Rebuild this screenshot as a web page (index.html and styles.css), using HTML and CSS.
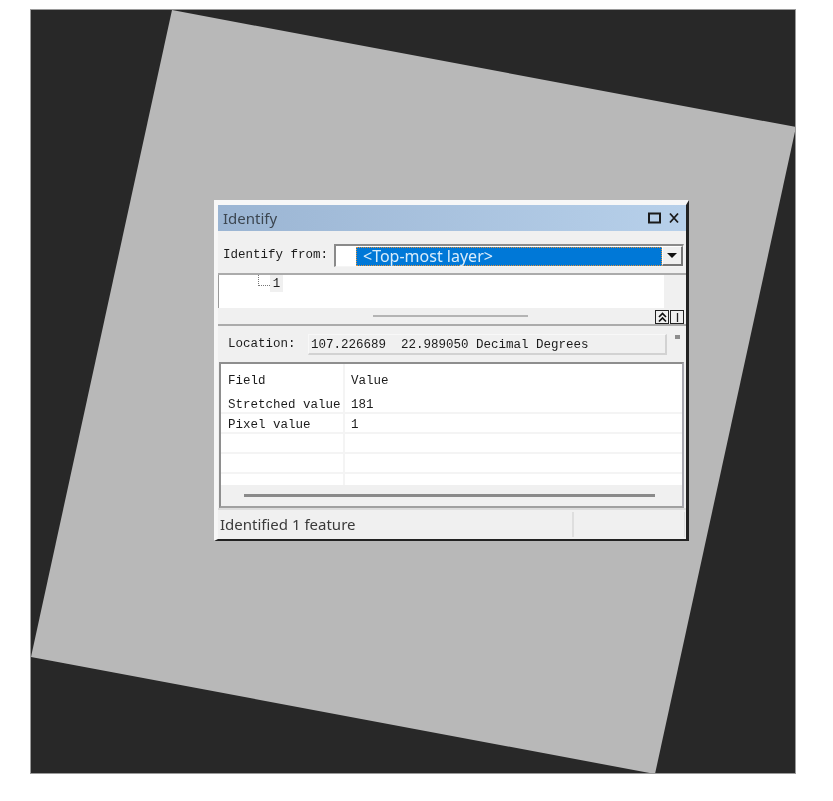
FILE: index.html
```html
<!DOCTYPE html>
<html lang="en">
<head>
    <meta charset="UTF-8">
    <title>Identify</title>
    <link rel="stylesheet" href="styles.css">
</head>
<body>
    <div class="scene">
        <svg class="raster" width="764" height="763" viewBox="0 0 764 763">
            <polygon points="141,0 765,117 624,764 0,647" fill="#b8b8b8"/>
        </svg>

        <div class="identify-window">
            <!-- Title -->
            <div class="title-bar">
                <span class="title-text">Identify</span>
                <svg class="title-icons" width="32" height="12" viewBox="0 0 32 12">
                    <rect x="1" y="1.500" width="11" height="9" fill="none" stroke="#1a1a1a" stroke-width="2"/>
                    <path d="M22 1.500l8 9M30 1.500l-8 9" fill="none" stroke="#1a1a1a" stroke-width="1.800"/>
                </svg>
            </div>

            <!-- Identify from -->
            <div class="from-row">
                <span class="mono-label from-label">Identify from:</span>
                <div class="combo">
                    <div class="combo-blank"></div>
                    <div class="combo-value">&lt;Top-most layer&gt;</div>
                    <div class="combo-btn"><span class="combo-arrow"></span></div>
                </div>
            </div>

            <!-- Tree -->
            <div class="tree-row">
                <div class="tree">
                    <span class="tree-branch"></span>
                    <span class="tree-label">1</span>
                </div>
                <div class="tree-gutter"></div>
            </div>

            <!-- Splitter -->
            <div class="splitter">
                <span class="splitter-line"></span>
                <div class="splitter-btns">
                    <span class="mini-btn">
                        <svg width="11" height="11" viewBox="0 0 11 11">
                            <path d="M2 5l3.500-3.500L9 5M2 9.500L5.500 6 9 9.500" fill="none" stroke="#111" stroke-width="1.700"/>
                        </svg>
                    </span>
                    <span class="mini-btn">
                        <svg width="11" height="11" viewBox="0 0 11 11">
                            <path d="M5.500 1v9" fill="none" stroke="#222" stroke-width="1.300"/>
                        </svg>
                    </span>
                </div>
            </div>

            <!-- Location -->
            <div class="location-row">
                <span class="mono-label location-label">Location:</span>
                <div class="location-field">107.226689  22.989050 Decimal Degrees</div>
                <span class="location-menu"></span>
            </div>

            <!-- Attributes -->
            <div class="attr-box">
                <div class="attr-row attr-head">
                    <div class="attr-cell attr-field">Field</div>
                    <div class="attr-cell attr-value">Value</div>
                </div>
                <div class="attr-row">
                    <div class="attr-cell attr-field">Stretched value</div>
                    <div class="attr-cell attr-value">181</div>
                </div>
                <div class="attr-row">
                    <div class="attr-cell attr-field">Pixel value</div>
                    <div class="attr-cell attr-value">1</div>
                </div>
                <div class="attr-row">
                    <div class="attr-cell attr-field"></div>
                    <div class="attr-cell attr-value"></div>
                </div>
                <div class="attr-row">
                    <div class="attr-cell attr-field"></div>
                    <div class="attr-cell attr-value"></div>
                </div>
                <div class="attr-row attr-last">
                    <div class="attr-cell attr-field"></div>
                    <div class="attr-cell attr-value"></div>
                </div>
                <div class="attr-scroll"><span class="attr-thumb"></span></div>
            </div>

            <!-- Status -->
            <div class="status-bar">
                <span class="status-text">Identified 1 feature</span>
                <span class="status-end"></span>
            </div>
        </div>
    </div>
</body>
</html>
```

FILE: styles.css
```css
* {
    margin: 0;
    padding: 0;
    box-sizing: border-box;
}

body {
    background: #fff;
    height: 100vh;
    overflow: hidden;
}

.scene {
    position: relative;
    width: 766px;
    height: 765px;
    margin: 9px 0 0 30px;
    background: #282828;
    border: 1px solid #9a9a9a;
    filter: blur(0.35px);
}

.raster {
    position: absolute;
    top: 0;
    left: 0;
    display: block;
}

.identify-window {
    position: absolute;
    top: 190px;
    left: 183px;
    width: 475px;
    height: 341px;
    display: flex;
    flex-direction: column;
    background: #f0f0f0;
    border-style: solid;
    border-width: 5px 3px 2px 4px;
    border-color: #f7f7f7 #222 #222 #f7f7f7;
}

.title-bar {
    height: 26px;
    flex: none;
    display: flex;
    align-items: center;
    justify-content: space-between;
    padding: 0 6px 0 5px;
    background: linear-gradient(90deg, #9bb5d3 0%, #b7d0ea 100%);
}

.title-text {
    font-family: "Noto Sans", sans-serif;
    font-size: 15px;
    color: #3c4650;
}

.title-icons {
    display: block;
    margin-bottom: 1px;
}

.mono-label {
    font-family: "Liberation Mono", monospace;
    font-size: 12.500px;
    color: #1c1c1c;
}

.from-row {
    height: 42px;
    flex: none;
    display: flex;
    align-items: center;
    padding: 7px 2px 0 5px;
}

.from-label {
    width: 109px;
    flex: none;
    white-space: nowrap;
    margin-top: -1px;
}

.combo {
    width: 350px;
    height: 23px;
    margin-left: 2px;
    display: flex;
    background: #fff;
    border-style: solid;
    border-width: 2px 1px 1px 2px;
    border-color: #8a8a8a #f5f5f5 #f5f5f5 #8a8a8a;
}

.combo-blank {
    width: 20px;
    flex: none;
}

.combo-value {
    flex: 1;
    margin-top: 1px;
    padding-left: 6px;
    background: #0078d7;
    border: 1px dotted #e0913a;
    font-family: "Noto Sans", sans-serif;
    font-size: 16px;
    line-height: 17px;
    white-space: nowrap;
    color: #d8ecfb;
}

.combo-btn {
    width: 21px;
    flex: none;
    display: flex;
    align-items: center;
    justify-content: center;
    background: #f0f0f0;
    border-style: solid;
    border-width: 1px 2px 2px 1px;
    border-color: #fff #777 #777 #fff;
}

.combo-arrow {
    width: 0;
    height: 0;
    border-style: solid;
    border-width: 5px 5px 0 5px;
    border-color: #111 transparent transparent transparent;
}

.tree-row {
    height: 35px;
    flex: none;
    display: flex;
    border-top: 2px solid #ababab;
}

.tree {
    position: relative;
    flex: 1;
    background: #fff;
    border-left: 1px solid #9a9a9a;
}

.tree-branch {
    position: absolute;
    top: 0;
    left: 39px;
    width: 12px;
    height: 11px;
    border-left: 1px dotted #777;
    border-bottom: 1px dotted #777;
}

.tree-label {
    position: absolute;
    top: 0;
    left: 51px;
    width: 13px;
    height: 17px;
    background: #f0f0f0;
    font-family: "Liberation Mono", monospace;
    font-size: 12.500px;
    line-height: 19px;
    text-align: center;
    color: #1c1c1c;
}

.tree-gutter {
    width: 22px;
    flex: none;
}

.splitter {
    height: 16px;
    flex: none;
    display: flex;
    align-items: center;
    justify-content: center;
}

.splitter-line {
    width: 155px;
    height: 2px;
    margin-left: -4px;
    background: #b4b4b4;
}

.splitter-btns {
    position: absolute;
    top: 105px;
    right: 2px;
    display: flex;
    gap: 1px;
}

.mini-btn {
    width: 14px;
    height: 14px;
    display: flex;
    align-items: center;
    justify-content: center;
    background: #f0f0f0;
    border: 1px solid #222;
}

.location-row {
    position: relative;
    height: 38px;
    flex: none;
    display: flex;
    align-items: center;
    padding: 0 0 0 10px;
    border-top: 2px solid #ababab;
}

.location-label {
    width: 80px;
    flex: none;
}

.location-field {
    width: 359px;
    height: 21px;
    margin-top: 1px;
    padding-left: 2px;
    font-family: "Liberation Mono", monospace;
    font-size: 12.500px;
    line-height: 21px;
    white-space: pre;
    color: #1c1c1c;
    border-style: solid;
    border-width: 1px 2px 2px 1px;
    border-color: #f8f8f8 #d2d2d2 #d2d2d2 #f8f8f8;
}

.location-menu {
    position: absolute;
    top: 9px;
    right: 6px;
    width: 5px;
    height: 4px;
    background: #8c8c8c;
}

.attr-box {
    height: 146px;
    flex: none;
    margin: 0 2px 0 1px;
    display: flex;
    flex-direction: column;
    background: #fff;
    border: 2px solid #8e8e8e;
    border-right-color: #a8a8b0;
    border-bottom-color: #a0a0a0;
}

.attr-row {
    height: 20px;
    flex: none;
    display: flex;
    border-bottom: 2px solid #f4f4f4;
    font-family: "Liberation Mono", monospace;
    font-size: 12.500px;
    color: #1c1c1c;
}

.attr-head {
    height: 30px;
    border-bottom: none;
}

.attr-last {
    height: 11px;
    border-bottom: none;
}

.attr-cell {
    padding: 3px 0 0 7px;
    display: flex;
    align-items: center;
}

.attr-field {
    width: 124px;
    flex: none;
    white-space: nowrap;
    border-right: 2px solid #f4f4f4;
}

.attr-value {
    padding-left: 6px;
}

.attr-scroll {
    flex: 1;
    display: flex;
    align-items: center;
    padding-left: 23px;
    background: #f0f0f0;
}

.attr-thumb {
    width: 411px;
    height: 3px;
    background: #8a8a8a;
}

.status-bar {
    flex: 1;
    display: flex;
    align-items: center;
    justify-content: space-between;
    padding: 0 1px 2px 2px;
    border-top: 2px solid #dcdcdc;
}

.status-text {
    font-family: "Noto Sans", sans-serif;
    font-size: 15px;
    color: #3a3a3a;
}

.status-end {
    width: 113px;
    height: 25px;
    margin-bottom: -2px;
    border-left: 2px solid #dedede;
    border-right: 1px solid #dedede;
}
```
